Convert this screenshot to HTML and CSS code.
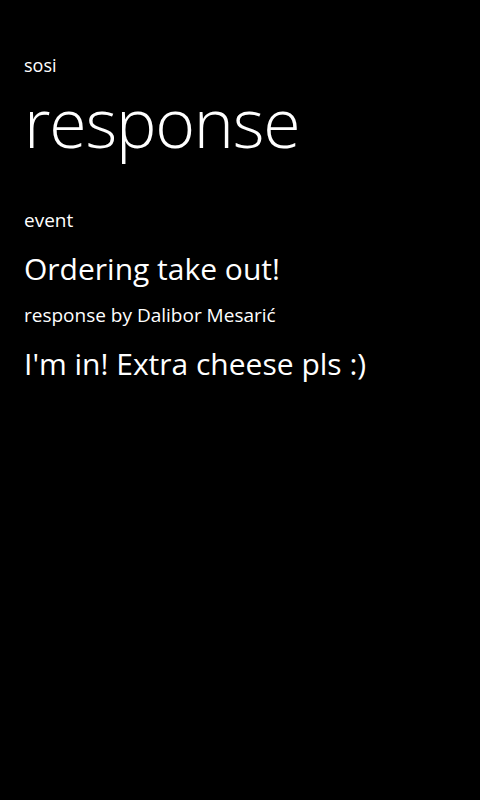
FILE: index.html
```html
<!DOCTYPE html>
<html>
<head>
<meta charset="utf-8">
<link rel="stylesheet" href="styles.css">
</head>
<body>
<div class="page">
  <div class="app-title">sosi</div>
  <h1 class="page-title">response</h1>
  <div class="content">
    <div class="label">event</div>
    <div class="value">Ordering take out!</div>
    <div class="label">response by Dalibor Mesarić</div>
    <div class="value">I'm in! Extra cheese pls :)</div>
  </div>
</div>
</body>
</html>
```
FILE: styles.css
```css
html, body {
  margin: 0;
  padding: 0;
  background: #000;
  color: #fff;
  width: 480px;
  height: 800px;
  overflow: hidden;
}
body {
  font-family: "Open Sans", "Noto Sans", sans-serif;
}
.page {
  padding: 52px 24px 0 24px;
}
.app-title {
  font-size: 18px;
  line-height: 26px;
}
.page-title {
  margin: 0;
  font-weight: 300;
  font-size: 68px;
  line-height: 88px;
  letter-spacing: -1.2px;
}
.content {
  margin-top: 39px;
  display: flex;
  flex-direction: column;
}
.label {
  font-size: 19px;
  line-height: 30px;
}
.value {
  margin-top: 2px;
  font-size: 30px;
  line-height: 63px;
}
```
